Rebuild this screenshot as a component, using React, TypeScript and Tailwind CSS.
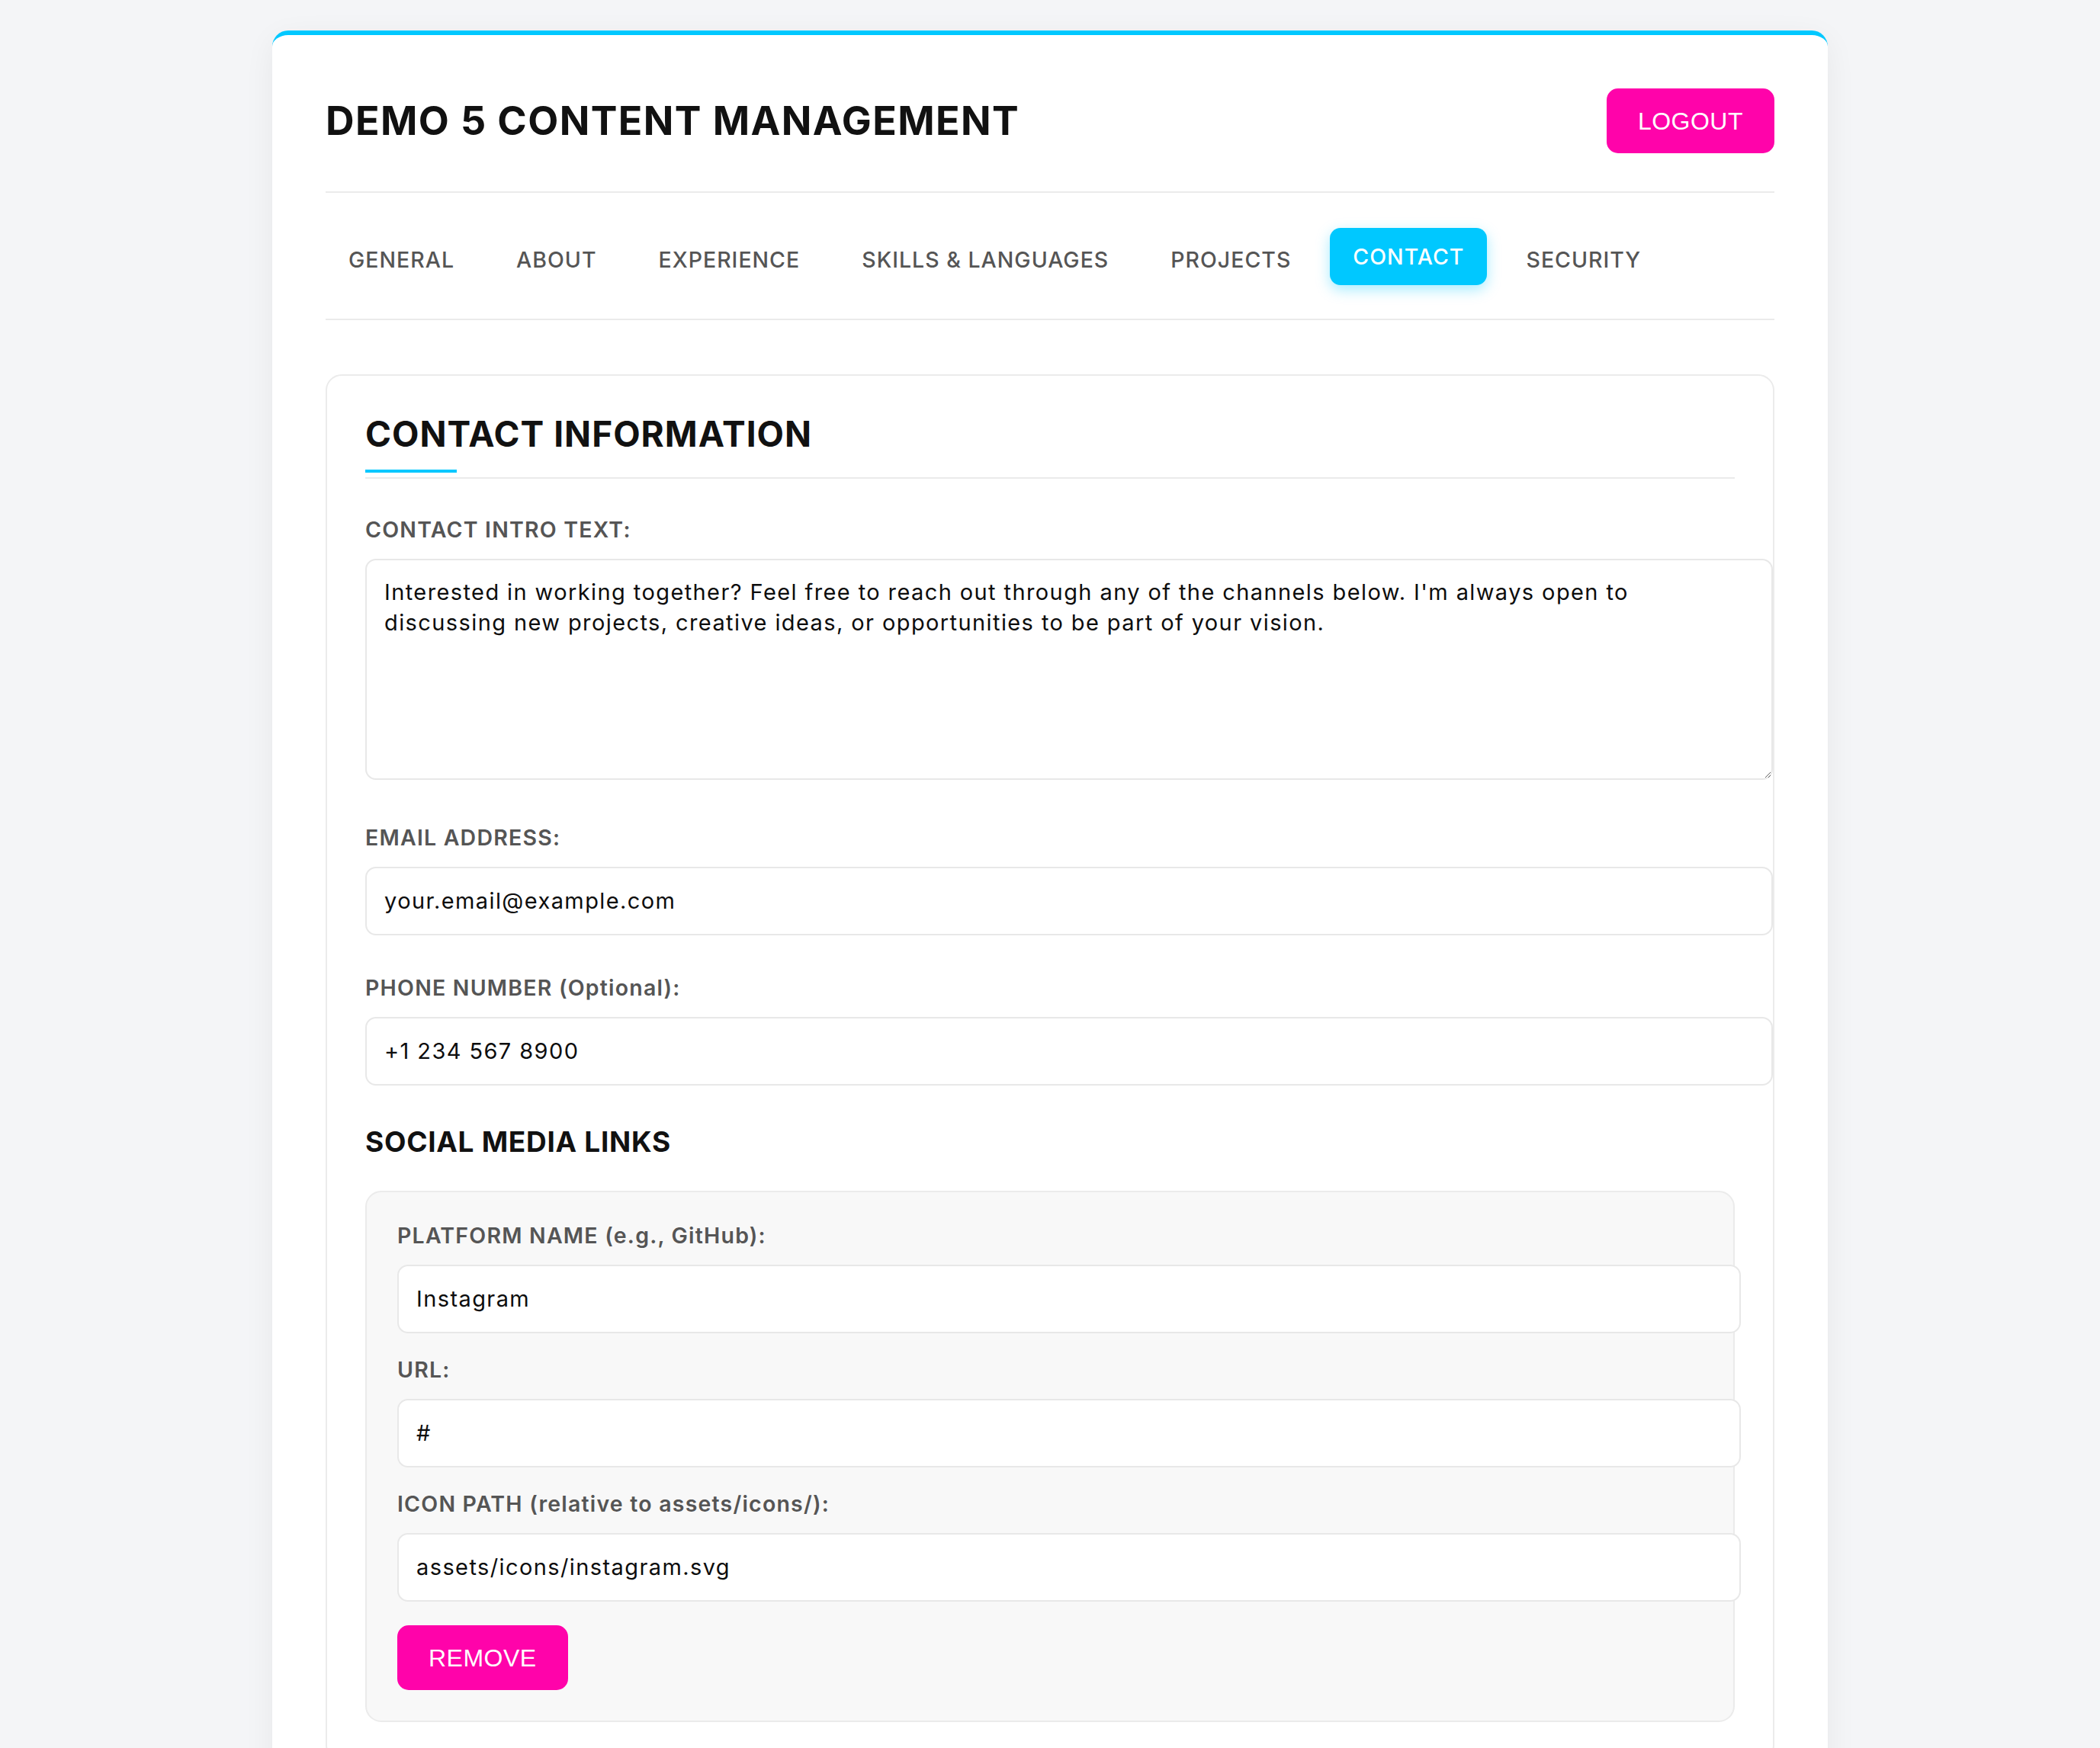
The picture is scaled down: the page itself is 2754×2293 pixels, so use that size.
const TABS = ["GENERAL", "ABOUT", "EXPERIENCE", "SKILLS & LANGUAGES", "PROJECTS", "CONTACT", "SECURITY"]

const labelCls =
  "block text-[28.5px] leading-[34px] font-semibold tracking-[1.2px] text-[#555] mb-[21px]"

const inputCls =
  "box-content block w-full h-[40px] px-[23px] py-[23px] border-2 border-[#e8e8e8] rounded-[14px] bg-white text-[29px] leading-[40px] tracking-[1.4px] text-[#0d0d0d] outline-none font-['Inter',sans-serif]"

interface FieldProps {
  label: string,
  value: string,
  spacing?: string
}

const Field = ({ label, value, spacing = "mb-[52px]" }: FieldProps) => (
  <div className={spacing}>
    <label className={labelCls}>{label}</label>
    <input type="text" defaultValue={value} className={inputCls} />
  </div>
)

const PinkButton = ({ label }: { label: string }) => (
  <button className="h-[85px] px-[41px] rounded-[15px] bg-[#ff03aa] text-white text-[32px] tracking-[0.5px] font-['Liberation_Sans',Arial,sans-serif]">
    {label}
  </button>
)

const Tab = ({ label, active = false }: { label: string, active?: boolean }) => (
  <button
    className={
      active
        ? "px-[30px] py-[21px] leading-[33px] rounded-[14px] bg-[#00c8ff] text-white text-[28.5px] font-medium tracking-[1px] -translate-y-[4px] shadow-[0_6px_18px_rgba(0,200,255,0.35)]"
        : "px-[30px] py-[21px] leading-[33px] rounded-[14px] text-[#555] text-[28.5px] font-medium tracking-[1px]"
    }
  >
    {label}
  </button>
)

export default function App() {
  return (
    <div className="min-h-screen bg-[#f4f5f7] pt-[40px] font-['Inter',sans-serif]">
      <div className="w-[2040px] mx-auto bg-white rounded-[21px] border-t-[6px] border-[#00c8ff] px-[70px] pt-[70px] pb-[60px] shadow-[0_10px_40px_rgba(0,0,0,0.06)]">
        {/* header */}
        <div className="flex items-center justify-between pb-[50px] border-b-2 border-[#ebebeb]">
          <h1 className="text-[52px] leading-[62px] font-bold tracking-[1.4px] text-[#111]">
            DEMO 5 CONTENT MANAGEMENT
          </h1>
          <PinkButton label="LOGOUT" />
        </div>

        {/* tabs */}
        <nav className="flex items-center gap-[21px] pt-[50px] pb-[40px] border-b-2 border-[#ebebeb]">
          {TABS.map((t) => (
            <Tab key={t} label={t} active={t === "CONTACT"} />
          ))}
        </nav>

        {/* contact section */}
        <section className="mt-[71px] border-2 border-[#ebebeb] rounded-[21px] px-[50px] pt-[50px] pb-[50px]">
          <div className="border-b-2 border-[#ebebeb] pb-[6px] mb-[50px]">
            <h2 className="text-[46px] leading-[53px] font-bold tracking-[1px] text-[#111]">
              CONTACT INFORMATION
            </h2>
            <div className="mt-[20px] w-[120px] h-[4px] bg-[#00c8ff]" />
          </div>

          <div className="mb-[59px]">
            <label className={labelCls}>CONTACT INTRO TEXT:</label>
            <textarea
              className="box-border block w-[calc(100%+50px)] h-[290px] pl-[23px] pr-[110px] py-[22px] border-2 border-[#e8e8e8] rounded-[14px] bg-white text-[29px] leading-[40px] tracking-[1.4px] text-[#0d0d0d] outline-none font-['Inter',sans-serif]"
              defaultValue="Interested in working together? Feel free to reach out through any of the channels below. I'm always open to discussing new projects, creative ideas, or opportunities to be part of your vision."
            />
          </div>

          <Field label="EMAIL ADDRESS:" value="your.email@example.com" />
          <Field label="PHONE NUMBER (Optional):" value="+1 234 567 8900" />

          <h3 className="pt-[1px] text-[37px] leading-[42px] font-bold tracking-[0.7px] text-[#111] mb-[43px]">
            SOCIAL MEDIA LINKS
          </h3>

          <div className="border-2 border-[#ebebeb] rounded-[21px] bg-[#f8f8f8] p-[40px]">
            <Field label="PLATFORM NAME (e.g., GitHub):" value="Instagram" spacing="mb-[31px]" />
            <Field label="URL:" value="#" spacing="mb-[31px]" />
            <Field label="ICON PATH (relative to assets/icons/):" value="assets/icons/instagram.svg" spacing="mb-[31px]" />
            <PinkButton label="REMOVE" />
          </div>
        </section>
      </div>
    </div>
  )
}
